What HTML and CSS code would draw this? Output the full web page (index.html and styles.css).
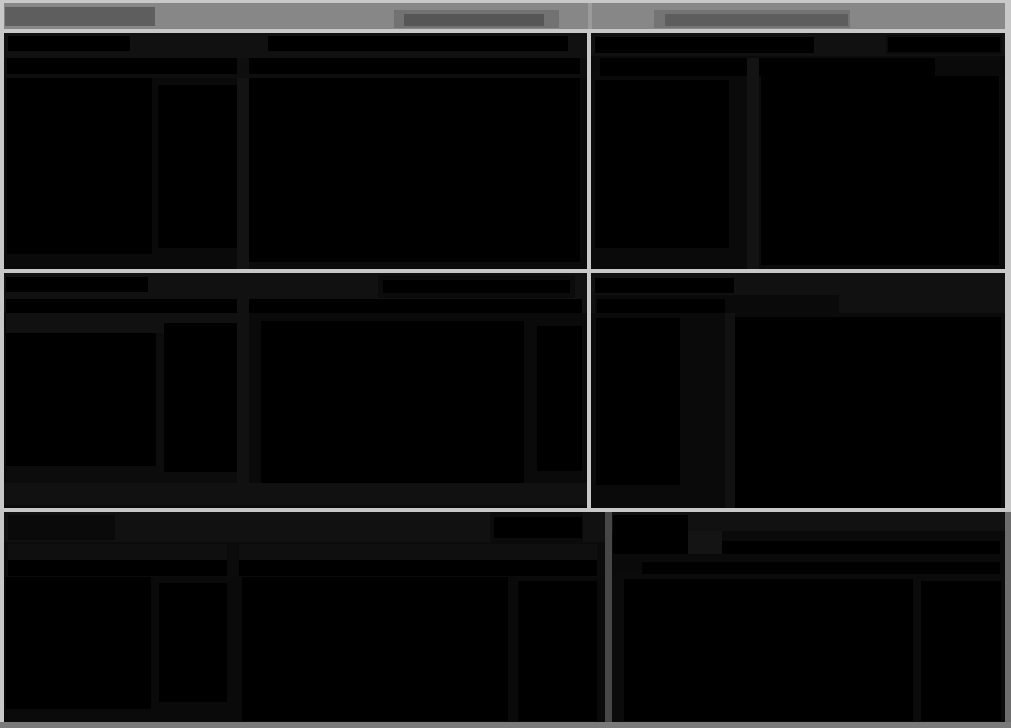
FILE: index.html
```html
<!DOCTYPE html>
<html>

<head>
    <meta charset="utf-8">
    <meta name="viewport" content="width=device-width, initial-scale=1.0">
    <title>Panels</title>
    <link rel="stylesheet" href="styles.css">
</head>

<body>
    <div class="screen">
        <!-- top bar -->
        <div class="topbar">
            <div class="tb-left">
                <span class="chip"></span>
                <span class="slot slot-a"><span></span></span>
            </div>
            <div class="tb-right">
                <span class="slot slot-b"><span></span></span>
            </div>
        </div>

        <!-- first row -->
        <div class="row">
            <section class="panel p1">
                <div class="hd"><i class="a"></i><i class="b"></i></div>
                <div class="tabs"><i class="a"></i><i class="b"></i></div>
                <div class="bd">
                    <div class="side"><i class="a"></i><i class="b"></i></div>
                    <b class="rule"></b>
                    <i class="main"></i>
                </div>
            </section>
            <section class="panel p2">
                <div class="hd"><i class="a"></i><i class="b"></i></div>
                <div class="tabs"><i class="a"></i><b class="rule"></b><i class="b"></i></div>
                <div class="bd">
                    <div class="side"><i class="a"></i></div>
                    <b class="rule"></b>
                    <i class="main"></i>
                </div>
            </section>
        </div>

        <!-- second row -->
        <div class="row">
            <section class="panel p3">
                <div class="hd"><i class="a"></i><i class="b"></i></div>
                <div class="tabs"><i class="a"></i><b class="rule"></b><i class="b"></i></div>
                <div class="bd">
                    <div class="side"><i class="a"></i><i class="b"></i></div>
                    <b class="rule"></b>
                    <div class="area"><i class="a"></i><i class="b"></i></div>
                </div>
                <div class="ft"></div>
            </section>
            <section class="panel p4">
                <div class="hd"><i class="a"></i></div>
                <div class="tabs">
                    <div class="grp"><i></i></div>
                </div>
                <div class="bd">
                    <div class="side"><i class="a"></i></div>
                    <b class="rule"></b>
                    <i class="main"></i>
                </div>
            </section>
        </div>

        <!-- third row -->
        <div class="row row-3">
            <section class="panel p5">
                <div class="hd"><i class="a"></i><i class="b"></i></div>
                <div class="tabs t1"><i class="a"></i><b class="rule"></b><i class="b"></i></div>
                <div class="tabs t2"><i class="a"></i><b class="rule"></b><i class="b"></i></div>
                <div class="bd"><i class="a"></i><i class="b"></i><i class="c"></i><i class="d"></i></div>
            </section>
            <section class="panel p6">
                <div class="hd"><i class="a"></i></div>
                <div class="r2"><i class="a"></i><b class="lt"></b><i class="b"></i></div>
                <div class="r4"><i class="a"></i></div>
                <div class="bd"><i class="a"></i><i class="b"></i></div>
            </section>
        </div>
    </div>
</body>

</html>
```

FILE: styles.css
```css
* {
    box-sizing: border-box;
}

html,
body {
    margin: 0;
    background: #6e6e6e;
    font-family: "Liberation Sans", Arial, sans-serif;
}

.screen {
    width: 1011px;
    height: 728px;
    display: grid;
    grid-template-rows: 26px 236px 235px 210px;
    row-gap: 4px;
    padding: 3px 6px 0 4px;
    border-bottom: 6px solid #7a7a7a;
    background: #c8c8c8;
}

/* top bar */
.topbar {
    display: flex;
    background: #878787;
}

.tb-left {
    width: 588px;
    display: flex;
    align-items: flex-start;
    border-right: 4px solid #9b9b9b;
}

.tb-right {
    flex: 1;
    display: flex;
    align-items: flex-start;
}

.chip {
    display: block;
    width: 150px;
    height: 19px;
    margin: 4px 0 0 1px;
    background: #5e5e5e;
}

.slot {
    display: block;
    height: 18px;
    margin-top: 7px;
    background: #727272;
}

.slot span {
    display: block;
    height: 12px;
    background: #565656;
}

.slot-a {
    width: 165px;
    margin-left: 239px;
    padding: 4px 15px 2px 10px;
}

.slot-b {
    width: 196px;
    margin-left: 62px;
    padding: 4px 2px 2px 11px;
    background: #747474;
}

.slot-b span {
    background: #5d5d5d;
}

/* rows */
.row {
    display: grid;
    grid-template-columns: 583px 414px;
    column-gap: 4px;
}

.row-3 {
    grid-template-columns: 601px 399px;
    column-gap: 7px;
    margin-right: -6px;
    background: #474747;
}

/* panels */
.panel {
    display: flex;
    flex-direction: column;
    overflow: hidden;
    background: #0b0b0b;
}

.panel i {
    display: block;
    flex: none;
    background: #000;
}

.hd,
.tabs,
.bd,
.r2,
.r4 {
    display: flex;
    align-items: flex-start;
    flex: none;
}

.bd {
    align-items: stretch;
}

.side,
.area {
    display: flex;
    align-items: flex-start;
    flex: none;
    background: #0a0a0a;
}

.rule {
    display: block;
    flex: none;
    width: 12px;
    align-self: stretch;
    background: #131313;
}

/* panel 1 */
.p1 .hd {
    height: 25px;
    padding: 3px 0 0 4px;
    background: #111;
}

.p1 .hd .a {
    width: 122px;
    height: 15px;
}

.p1 .hd .b {
    width: 300px;
    height: 15px;
    margin-left: 138px;
}

.p1 .tabs {
    height: 20px;
    padding: 0 0 4px 3px;
    background: #0e0e0e;
}

.p1 .tabs .a {
    width: 230px;
    height: 16px;
}

.p1 .tabs .b {
    width: 331px;
    height: 16px;
    margin-left: 12px;
}

.p1 .bd {
    flex: 1;
    padding-left: 3px;
}

.p1 .side {
    width: 230px;
}

.p1 .side .a {
    width: 145px;
    height: 176px;
}

.p1 .side .b {
    width: 79px;
    height: 163px;
    margin: 7px 0 0 6px;
}

.p1 .main {
    width: 331px;
    height: 184px;
}

/* panel 2 */
.p2 .hd {
    height: 25px;
    padding: 4px 0 0 4px;
    background: #111;
    border-bottom: 2px solid #0b0b0b;
}

.p2 .hd .a {
    width: 219px;
    height: 16px;
}

.p2 .hd .b {
    width: 116px;
    height: 19px;
    margin: -2px 0 0 72px;
    border: 2px solid #0b0b0b;
}

.p2 .tabs {
    height: 18px;
    padding-left: 9px;
    background: #0a0a0a;
}

.p2 .tabs .a {
    width: 147px;
    height: 18px;
}

.p2 .tabs .b {
    width: 176px;
    height: 18px;
}

.p2 .bd {
    flex: 1;
    padding-left: 4px;
}

.p2 .side {
    width: 152px;
}

.p2 .side .a {
    width: 134px;
    height: 168px;
    margin-top: 4px;
}

.p2 .main {
    width: 238px;
    height: 189px;
    margin-left: 2px;
}

/* panel 3 */
.p3 .hd {
    height: 26px;
    padding: 4px 0 0 2px;
    background: #111;
}

.p3 .hd .a {
    width: 142px;
    height: 15px;
}

.p3 .hd .b {
    width: 197px;
    height: 23px;
    margin: -2px 0 0 230px;
    border: 5px solid #0b0b0b;
}

.p3 .tabs {
    height: 14px;
    padding-left: 2px;
    background: #111;
}

.p3 .tabs .a {
    width: 231px;
    height: 14px;
}

.p3 .tabs .b {
    width: 333px;
    height: 14px;
}

.p3 .bd {
    height: 170px;
    padding-left: 2px;
}

.p3 .side {
    width: 231px;
    background: linear-gradient(#111 20px, #0c0c0c 20px);
}

.p3 .side .a {
    width: 150px;
    height: 133px;
    margin-top: 20px;
}

.p3 .side .b {
    width: 73px;
    height: 149px;
    margin: 10px 0 0 8px;
}

.p3 .rule {
    background: #111;
}

.p3 .area {
    width: 333px;
}

.p3 .area .a {
    width: 263px;
    height: 162px;
    margin: 8px 0 0 12px;
}

.p3 .area .b {
    width: 45px;
    height: 145px;
    margin: 13px 0 0 13px;
}

.p3 .ft {
    flex: 1;
    border-bottom: 3px solid #0b0b0b;
    background: #111;
}

/* panel 4 */
.p4 .hd {
    height: 22px;
    padding: 5px 0 0 4px;
    background: #111;
}

.p4 .hd .a {
    width: 139px;
    height: 15px;
}

.p4 .tabs {
    height: 18px;
    padding-left: 4px;
    background: #111;
}

.p4 .grp {
    width: 244px;
    height: 18px;
    padding: 4px 0 0 2px;
    background: #0a0a0a;
}

.p4 .grp i {
    width: 128px;
    height: 14px;
}

.p4 .bd {
    flex: 1;
    padding-left: 5px;
}

.p4 .side {
    width: 129px;
}

.p4 .side .a {
    width: 84px;
    height: 167px;
    margin-top: 5px;
}

.p4 .rule {
    width: 10px;
    background: #111;
}

.p4 .main {
    width: 266px;
    margin-top: 4px;
}

/* panel 5 */
.p5 .hd {
    height: 30px;
    padding-left: 4px;
    background: #111;
}

.p5 .hd .a {
    width: 107px;
    height: 25px;
    margin-top: 3px;
    background: #0a0a0a;
}

.p5 .hd .b {
    width: 93px;
    height: 30px;
    margin-left: 375px;
    border-style: solid;
    border-color: #0b0b0b;
    border-width: 5px 1px 4px 4px;
}

.p5 .tabs {
    height: 16px;
    padding-left: 4px;
}

.p5 .t1 {
    margin-top: 2px;
}

.p5 .tabs .a {
    width: 219px;
    height: 16px;
}

.p5 .tabs .b {
    width: 358px;
    height: 16px;
}

.p5 .t1 .a,
.p5 .t1 .b {
    background: #0f0f0f;
}

.p5 .rule {
    background: #0b0b0b;
}

.p5 .bd {
    flex: 1;
    margin-top: 1px;
    padding-left: 2px;
    align-items: flex-start;
    background: #0a0a0a;
}

.p5 .bd .a {
    width: 145px;
    height: 132px;
}

.p5 .bd .b {
    width: 68px;
    height: 119px;
    margin: 6px 0 0 8px;
}

.p5 .bd .c {
    width: 266px;
    height: 144px;
    margin-left: 15px;
}

.p5 .bd .d {
    width: 79px;
    height: 140px;
    margin: 4px 0 0 10px;
}

/* panel 6 */
.p6 {
    border-right: 6px solid #6d6d6d;
}

.p6 .hd {
    height: 19px;
    background: #111;
}

.p6 .hd .a {
    width: 75px;
    height: 16px;
    margin: 3px 0 0 1px;
}

.p6 .r2 {
    height: 23px;
    background: #0a0a0a;
}

.p6 .r2 .a {
    width: 75px;
    height: 23px;
    margin-left: 1px;
}

.p6 .lt {
    display: block;
    width: 34px;
    height: 23px;
    background: #141414;
}

.p6 .r2 .b {
    width: 278px;
    height: 13px;
    margin-top: 10px;
}

.p6 .r4 {
    height: 20px;
    padding: 8px 0 0 30px;
    background: #0a0a0a;
}

.p6 .r4 .a {
    width: 358px;
    height: 12px;
}

.p6 .bd {
    flex: 1;
    margin-top: 5px;
    padding-left: 12px;
    align-items: flex-start;
}

.p6 .bd .a {
    width: 289px;
    height: 142px;
}

.p6 .bd .b {
    width: 80px;
    height: 140px;
    margin: 2px 0 0 8px;
}
```
